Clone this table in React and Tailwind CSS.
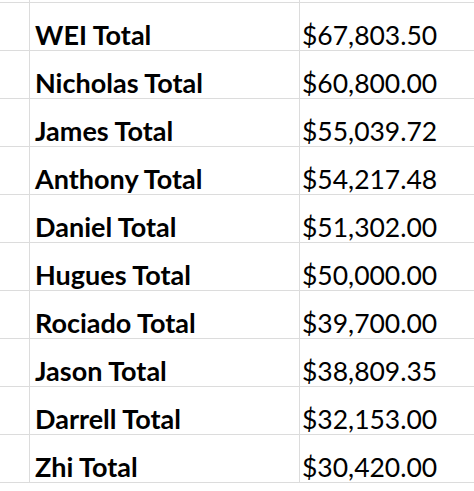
const rows = [
  ["WEI Total", "$67,803.50"],
  ["Nicholas Total", "$60,800.00"],
  ["James Total", "$55,039.72"],
  ["Anthony Total", "$54,217.48"],
  ["Daniel Total", "$51,302.00"],
  ["Hugues Total", "$50,000.00"],
  ["Rociado Total", "$39,700.00"],
  ["Jason Total", "$38,809.35"],
  ["Darrell Total", "$32,153.00"],
  ["Zhi Total", "$30,420.00"],
];

export default function App() {
  return (
    <div
      className="w-[474px] h-[491px] overflow-hidden bg-white text-black"
      style={{ fontFamily: "Lato, 'Liberation Sans', sans-serif" }}
    >
      <div className="grid grid-cols-[30px_270px_200px]">
        <div className="h-[3px] border-r border-b border-[#dcdcdc]" />
        <div className="h-[3px] border-r border-b border-[#dcdcdc]" />
        <div className="h-[3px] border-r border-b border-[#dcdcdc]" />
        {rows.map(([name, amount]) => (
          <div key={name} className="contents">
            <div className="h-[48px] border-r border-b border-[#dcdcdc]" />
            <div className="h-[48px] border-r border-b border-[#dcdcdc] flex items-end pl-[5px] pb-[2px] text-[27px] leading-none font-bold whitespace-nowrap">
              {name}
            </div>
            <div className="h-[48px] border-r border-b border-[#dcdcdc] flex items-end pl-[2px] pb-[2px] text-[26.5px] leading-none whitespace-nowrap">
              {amount}
            </div>
          </div>
        ))}
      </div>
    </div>
  );
}
